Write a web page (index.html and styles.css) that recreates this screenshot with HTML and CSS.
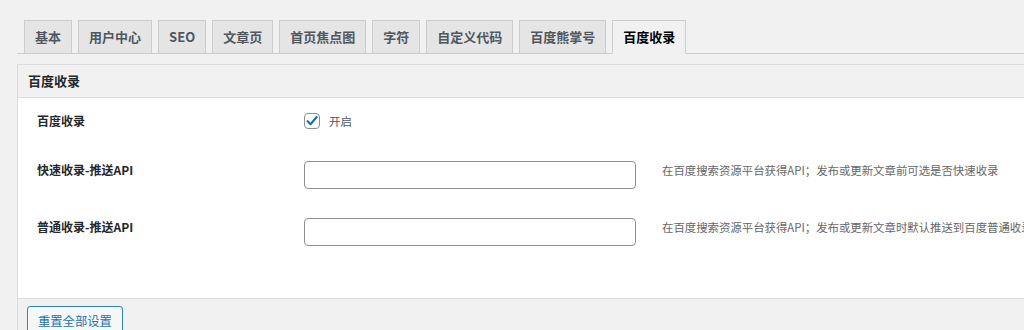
FILE: index.html
```html
<!DOCTYPE html>
<html>
  <head>
    <meta charset="utf-8">
    <title>百度收录设置</title>
    <link rel="stylesheet" href="styles.css">
  </head>
  <body>
    <div class="wrap">
      <nav class="tabs">
        <a class="tab">基本</a>
        <a class="tab">用户中心</a>
        <a class="tab">SEO</a>
        <a class="tab">文章页</a>
        <a class="tab">首页焦点图</a>
        <a class="tab">字符</a>
        <a class="tab">自定义代码</a>
        <a class="tab">百度熊掌号</a>
        <a class="tab active">百度收录</a>
      </nav>
      <div class="panel">
        <h2 class="panel-title">百度收录</h2>
        <div class="panel-body">
          <div class="row row-check">
            <div class="label">百度收录</div>
            <label class="check">
              <span class="box">
                <svg width="14" height="14" viewBox="0 0 14 14"><path d="M2.6 7.2 L5.6 10.2 L11.6 3" fill="none" stroke="#2271b1" stroke-width="2.2" stroke-linecap="round" stroke-linejoin="round"/></svg>
              </span>
              开启
            </label>
          </div>
          <div class="row">
            <div class="label">快速收录-推送API</div>
            <input class="text" type="text">
            <p class="desc">在百度搜索资源平台获得API；发布或更新文章前可选是否快速收录</p>
          </div>
          <div class="row">
            <div class="label">普通收录-推送API</div>
            <input class="text" type="text">
            <p class="desc">在百度搜索资源平台获得API；发布或更新文章时默认推送到百度普通收录</p>
          </div>
        </div>
        <div class="panel-foot">
          <button class="btn">重置全部设置</button>
        </div>
      </div>
    </div>
  </body>
</html>
```

FILE: styles.css
```css
html, body {
  margin: 0;
  overflow: hidden;
  background: #f1f1f1;
  font-family: "Noto Sans CJK SC", "Liberation Sans", sans-serif;
  color: #23282d;
}
div.wrap {
  padding: 20px 0 0 17px;
}
nav.tabs {
  display: flex;
  border-bottom: 1px solid #ccc;
  padding-left: 1px;
}
nav.tabs a.tab {
  margin: 0 0 -1px 6px;
  padding: 4px 10px;
  line-height: 24px;
  font-size: 13px;
  font-weight: 600;
  color: #50575e;
  background: #e5e5e5;
  border: 1px solid #ccc;
  white-space: nowrap;
}
nav.tabs a.tab.active {
  color: #000;
  background: #f1f1f1;
  border-bottom-color: #f1f1f1;
}
div.panel {
  margin-top: 10px;
  border: 1px solid #dcdcde;
  border-right: none;
}
h2.panel-title {
  margin: 0;
  height: 32px;
  line-height: 32px;
  padding-left: 10px;
  font-size: 13px;
  font-weight: 600;
  border-bottom: 1px solid #dcdcde;
}
div.panel-body {
  background: #fff;
  padding: 14px 0 52px 19px;
}
div.row {
  display: grid;
  grid-template-columns: 267px 332px 1fr;
  align-items: start;
  margin-bottom: 29px;
}
div.row:last-child {
  margin-bottom: 0;
}
div.row.row-check {
  height: 18px;
  margin-bottom: 31px;
}
div.label {
  font-size: 12px;
  font-weight: 600;
  line-height: 18px;
  color: #23282d;
  white-space: nowrap;
}
label.check {
  display: flex;
  align-items: center;
  height: 18px;
  font-size: 11.5px;
  color: #50575e;
}
span.box {
  width: 14px;
  height: 14px;
  margin-right: 9px;
  border: 1px solid #8c8f94;
  border-radius: 4px;
  display: flex;
  align-items: center;
  justify-content: center;
  background: #fff;
}
input.text {
  box-sizing: border-box;
  width: 332px;
  height: 28px;
  margin: 0;
  border: 1px solid #8c8f94;
  border-radius: 4px;
  background: #fff;
}
p.desc {
  margin: 0 0 0 26px;
  font-size: 11.4px;
  line-height: 18px;
  color: #666;
  white-space: nowrap;
}
div.panel-foot {
  border-top: 1px solid #dcdcde;
  padding: 7px 0 0 9px;
  height: 24px;
}
button.btn {
  height: 30px;
  padding: 0 10px;
  font-family: inherit;
  font-size: 12.3px;
  color: #2271b1;
  background: #f6f7f7;
  border: 1px solid #3582c4;
  border-radius: 3px;
}
```
